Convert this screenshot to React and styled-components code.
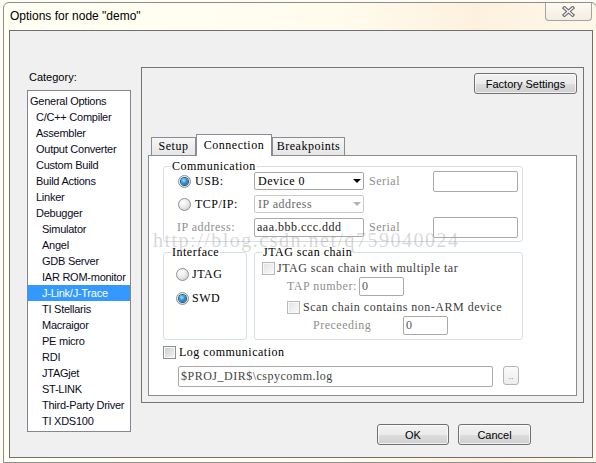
import React from 'react';
import styled, { createGlobalStyle, css } from 'styled-components';

const UI = `"Liberation Sans", Arial, sans-serif`;
const SONG = `"Liberation Serif", "Times New Roman", serif`;

const GlobalStyle = createGlobalStyle`
  html, body { margin: 0; padding: 0; overflow: hidden; background: #fdfcf2; }
  body { font-family: ${UI}; }
  * { box-sizing: border-box; }
`;

const Window = styled.div`
  margin: 2px 0 0 3px;
  width: 594px;
  height: 461px;
  border: 1px solid #8d8d8d;
  border-radius: 6px 6px 0 0;
  background: linear-gradient(to right, #fffff3 0%, #fffcee 55%, #fdf1de 80%, #fef8ea 100%);
  display: flex;
  flex-direction: column;
`;

const TitleBar = styled.div`
  height: 27px;
  display: flex;
  justify-content: space-between;
  align-items: flex-start;
  padding-left: 6px;
`;

const Title = styled.div`
  margin-top: 6px;
  font: 12px/14px ${UI};
  color: #000;
`;

const CloseButton = styled.div`
  width: 47px;
  height: 18px;
  margin-right: 4px;
  border: 1px solid #a3a3a3;
  border-top: none;
  border-radius: 0 0 4px 4px;
  background: linear-gradient(#fdfaf2, #f3ede2);
  display: flex;
  align-items: center;
  justify-content: center;
`;

const Client = styled.div`
  margin-left: 5px;
  width: 584px;
  height: 428px;
  border: 1px solid #6f6f6f;
  background: #f0f0f0;
  display: flex;
`;

const LeftCol = styled.div`
  margin-left: 17px;
  width: 104px;
  display: flex;
  flex-direction: column;
`;

const CategoryLabel = styled.div`
  margin-top: 39px;
  padding-left: 2px;
  font: 11px/14px ${UI};
  color: #000;
`;

const CategoryList = styled.div`
  margin-top: 6px;
  height: 342px;
  border: 1px solid #828790;
  background: #fff;
  padding-top: 2px;
`;

const CategoryItem = styled.div`
  height: 16px;
  line-height: 16px;
  font-size: 11px;
  letter-spacing: -0.25px;
  white-space: nowrap;
  padding-left: ${p => 2 + p.$level * 6}px;
  color: ${p => (p.$selected ? '#fff' : '#0a0a1e')};
  background: ${p => (p.$selected ? '#3399ff' : 'transparent')};
`;

const RightCol = styled.div`
  margin-left: 10px;
  width: 443px;
  display: flex;
  flex-direction: column;
`;

const Panel = styled.div`
  margin-top: 36px;
  height: 336px;
  border: 1px solid #747474;
  padding: 5px 6px 0;
  display: flex;
  flex-direction: column;
`;

const Button = styled.div`
  width: ${p => p.$w}px;
  height: 21px;
  border: 1px solid #707070;
  border-radius: 3px;
  background: linear-gradient(#f2f2f2 0%, #ebebeb 50%, #dddddd 51%, #cfcfcf 100%);
  box-shadow: inset 0 0 0 1px rgba(255, 255, 255, 0.7);
  display: flex;
  align-items: center;
  justify-content: center;
  font: 11px ${UI};
  color: #000;
`;

const FactoryButton = styled(Button)`
  align-self: flex-end;
`;

const TabStrip = styled.div`
  margin-top: 40px;
  height: 21px;
  padding-left: 3px;
  display: flex;
  align-items: flex-end;
`;

const Tab = styled.div`
  width: ${p => p.$w}px;
  height: 18px;
  border: 1px solid #898c95;
  border-bottom: none;
  background: linear-gradient(#f6f6f6, #e6e6e6);
  display: flex;
  align-items: center;
  justify-content: center;
  font: 12px ${SONG};
  letter-spacing: 0.5px;
  color: #000;
  ${p =>
    p.$active &&
    css`
      height: 22px;
      margin-bottom: -1px;
      background: #fff;
      position: relative;
      z-index: 1;
      align-items: flex-start;
      padding-top: 3px;
    `}
`;

const TabPage = styled.div`
  height: 241px;
  border: 1px solid #898c95;
  background: #fff;
  position: relative;
  font: 12px ${SONG};
  letter-spacing: 0.5px;
  color: #000;
  display: flex;
  flex-direction: column;
`;

const Watermark = styled.div`
  position: absolute;
  left: 4px;
  top: 74px;
  font: 20px/20px ${SONG};
  letter-spacing: 1.5px;
  color: rgba(150, 150, 150, 0.38);
  white-space: nowrap;
  pointer-events: none;
`;

const Group = styled.div`
  width: ${p => p.$w}px;
  height: ${p => p.$h}px;
  border: 1px solid #d5dfe5;
  border-radius: 3px;
  display: flex;
  flex-direction: column;
`;

const Legend = styled.div`
  align-self: flex-start;
  margin: -7px 0 0 7px;
  padding: 0 1px;
  line-height: 12px;
  height: 12px;
  background: #fff;
  white-space: nowrap;
`;

const CommGroup = styled(Group)`
  margin: 10px 0 0 14px;
`;

const CommGrid = styled.div`
  margin-top: -1px;
  display: grid;
  grid-template-columns: 90px 110px 69px 85px;
  grid-template-rows: 20px 20px 20px;
  row-gap: 3px;
  align-items: center;
`;

const RadioCell = styled.div`
  display: flex;
  align-items: center;
  gap: ${p => p.$gap ?? 4}px;
  padding-left: ${p => p.$pad ?? 14}px;
  white-space: nowrap;
`;

const Radio = styled.span`
  width: 13px;
  height: 13px;
  flex: none;
  border-radius: 50%;
  border: 1px solid #8f8f8f;
  background: radial-gradient(circle at 35% 30%, #ffffff 0%, #ececec 45%, #c6c6c6 100%);
  display: inline-flex;
  align-items: center;
  justify-content: center;
  ${p =>
    p.$checked &&
    css`
      &::after {
        content: '';
        width: 7px;
        height: 7px;
        border-radius: 50%;
        background: radial-gradient(circle at 40% 35%, #9be6ff 0%, #2d93da 45%, #0a4d8c 100%);
        box-shadow: 0 0 0 1px #24557f;
      }
    `}
`;

const Check = styled.span`
  width: 13px;
  height: 13px;
  flex: none;
  border: 1px solid ${p => (p.$disabled ? '#b8b8b8' : '#8e8f8f')};
  background: ${p =>
    p.$disabled
      ? 'linear-gradient(135deg, #e2e2e2, #fafafa)'
      : 'linear-gradient(135deg, #c9cbce, #f5f5f5)'};
  box-shadow: inset 0 0 0 1px #f8f8f8;
`;

const Muted = styled.span`
  color: ${p => p.$tone || '#8e8e8e'};
  white-space: nowrap;
  padding-left: ${p => p.$pad || 0}px;
  width: ${p => (p.$w ? `${p.$w}px` : 'auto')};
  flex: none;
`;

const Select = styled.div`
  width: 110px;
  height: 18px;
  border: 1px solid ${p => (p.$disabled ? '#c8c8c8' : '#a7a7a7')};
  border-radius: 2px;
  background: #fff;
  display: flex;
  align-items: center;
  justify-content: space-between;
  padding: 0 2px 0 3px;
  color: ${p => (p.$disabled ? '#6a6a6a' : '#000')};
  white-space: nowrap;
`;

const Field = styled.div`
  width: ${p => p.$w}px;
  height: ${p => p.$h || 19}px;
  border: 1px solid #a9a9a9;
  border-radius: 2px;
  background: #fff;
  display: flex;
  align-items: center;
  padding-left: 2px;
  color: ${p => p.$color || '#333'};
  white-space: nowrap;
  overflow: hidden;
`;

const GroupRow = styled.div`
  margin-top: 10px;
  margin-left: 14px;
  display: flex;
  gap: 7px;
`;

const IfaceRadios = styled.div`
  margin-top: 8px;
  display: flex;
  flex-direction: column;
  gap: 8px;
`;

const IfaceRow = styled(RadioCell)`
  height: 16px;
`;

const JRow = styled.div`
  margin-top: ${p => p.$mt}px;
  padding-left: ${p => p.$pad}px;
  height: ${p => p.$h}px;
  display: flex;
  align-items: center;
  gap: ${p => p.$gap || 0}px;
  white-space: nowrap;
  overflow: hidden;
`;

const LogRow = styled.div`
  margin-top: 6px;
  padding-left: 14px;
  height: 13px;
  display: flex;
  align-items: center;
  gap: 3px;
`;

const PathRow = styled.div`
  margin-top: 7px;
  padding-left: 29px;
  display: flex;
  align-items: flex-start;
  gap: 10px;
`;

const BrowseButton = styled.div`
  width: 16px;
  height: 19px;
  border: 1px solid #b5b5b5;
  border-radius: 3px;
  background: linear-gradient(#fbfbfb, #ececec);
  display: flex;
  align-items: flex-end;
  justify-content: center;
  padding-bottom: 3px;
  font: 9px ${UI};
  letter-spacing: 0;
  color: #8a8a8a;
`;

const ButtonRow = styled.div`
  margin-top: 21px;
  padding-right: 53px;
  display: flex;
  justify-content: flex-end;
  gap: 9px;
`;

const Arrow = ({ color }) => (
  <svg width="8" height="4" viewBox="0 0 8 4">
    <polygon points="0,0 8,0 4,4" fill={color} />
  </svg>
);

const CloseX = () => (
  <svg width="13" height="11" viewBox="0 0 13 11">
    <path d="M2.5 2 L10.5 9 M10.5 2 L2.5 9" stroke="#6a6a6a" strokeWidth="3.6" strokeLinecap="square" />
    <path d="M2.5 2 L10.5 9 M10.5 2 L2.5 9" stroke="#f6f6f6" strokeWidth="1.5" strokeLinecap="square" />
  </svg>
);

const categories = [
  ['General Options', 0],
  ['C/C++ Compiler', 1],
  ['Assembler', 1],
  ['Output Converter', 1],
  ['Custom Build', 1],
  ['Build Actions', 1],
  ['Linker', 1],
  ['Debugger', 1],
  ['Simulator', 2],
  ['Angel', 2],
  ['GDB Server', 2],
  ['IAR ROM-monitor', 2],
  ['J-Link/J-Trace', 2],
  ['TI Stellaris', 2],
  ['Macraigor', 2],
  ['PE micro', 2],
  ['RDI', 2],
  ['JTAGjet', 2],
  ['ST-LINK', 2],
  ['Third-Party Driver', 2],
  ['TI XDS100', 2],
];

export default function App() {
  return (
    <>
      <GlobalStyle />
      <Window>
        <TitleBar>
          <Title>Options for node "demo"</Title>
          <CloseButton>
            <CloseX />
          </CloseButton>
        </TitleBar>
        <Client>
          <LeftCol>
            <CategoryLabel>Category:</CategoryLabel>
            <CategoryList>
              {categories.map(([name, level]) => (
                <CategoryItem key={name} $level={level} $selected={name === 'J-Link/J-Trace'}>
                  {name}
                </CategoryItem>
              ))}
            </CategoryList>
          </LeftCol>
          <RightCol>
            <Panel>
              <FactoryButton $w={103}>Factory Settings</FactoryButton>
              <TabStrip>
                <Tab $w={45}>Setup</Tab>
                <Tab $w={76} $active>Connection</Tab>
                <Tab $w={73}>Breakpoints</Tab>
              </TabStrip>
              <TabPage>
                <CommGroup $w={360} $h={76}>
                  <Legend>Communication</Legend>
                  <CommGrid>
                    <RadioCell>
                      <Radio $checked />
                      <span>USB:</span>
                    </RadioCell>
                    <Select>
                      <span>Device 0</span>
                      <Arrow color="#000" />
                    </Select>
                    <Muted $pad={5}>Serial</Muted>
                    <Field $w={85} $h={21} />

                    <RadioCell>
                      <Radio />
                      <span>TCP/IP:</span>
                    </RadioCell>
                    <Select $disabled>
                      <span>IP address</span>
                      <Arrow color="#b4b4b4" />
                    </Select>
                    <span />
                    <span />

                    <Muted $pad={13}>IP address:</Muted>
                    <Field $w={110} $color="#222">aaa.bbb.ccc.ddd</Field>
                    <Muted $pad={5}>Serial</Muted>
                    <Field $w={85} $h={21} />
                  </CommGrid>
                </CommGroup>

                <GroupRow>
                  <Group $w={84} $h={88}>
                    <Legend>Interface</Legend>
                    <IfaceRadios>
                      <IfaceRow $pad={12} $gap={3}>
                        <Radio />
                        <span>JTAG</span>
                      </IfaceRow>
                      <IfaceRow $pad={12} $gap={3}>
                        <Radio $checked />
                        <span>SWD</span>
                      </IfaceRow>
                    </IfaceRadios>
                  </Group>
                  <Group $w={269} $h={88}>
                    <Legend>JTAG scan chain</Legend>
                    <JRow $mt={3} $pad={7} $h={14} $gap={2}>
                      <Check $disabled />
                      <Muted $tone="#3c3c3c">JTAG scan chain with multiple tar</Muted>
                    </JRow>
                    <JRow $mt={2} $pad={32} $h={19}>
                      <Muted $w={72}>TAP number:</Muted>
                      <Field $w={45} $color="#555">0</Field>
                    </JRow>
                    <JRow $mt={4} $pad={32} $h={14} $gap={3}>
                      <Check $disabled />
                      <Muted $tone="#3c3c3c">Scan chain contains non-ARM device</Muted>
                    </JRow>
                    <JRow $mt={2} $pad={58} $h={19}>
                      <Muted $w={90}>Preceeding</Muted>
                      <Field $w={45} $color="#555">0</Field>
                    </JRow>
                  </Group>
                </GroupRow>

                <LogRow>
                  <Check />
                  <span>Log communication</span>
                </LogRow>
                <PathRow>
                  <Field $w={315} $h={21} $color="#444">$PROJ_DIR$\cspycomm.log</Field>
                  <BrowseButton>..</BrowseButton>
                </PathRow>

                <Watermark>http://blog.csdn.net/q759040024</Watermark>
              </TabPage>
            </Panel>
            <ButtonRow>
              <Button $w={72}>OK</Button>
              <Button $w={73}>Cancel</Button>
            </ButtonRow>
          </RightCol>
        </Client>
      </Window>
    </>
  );
}
